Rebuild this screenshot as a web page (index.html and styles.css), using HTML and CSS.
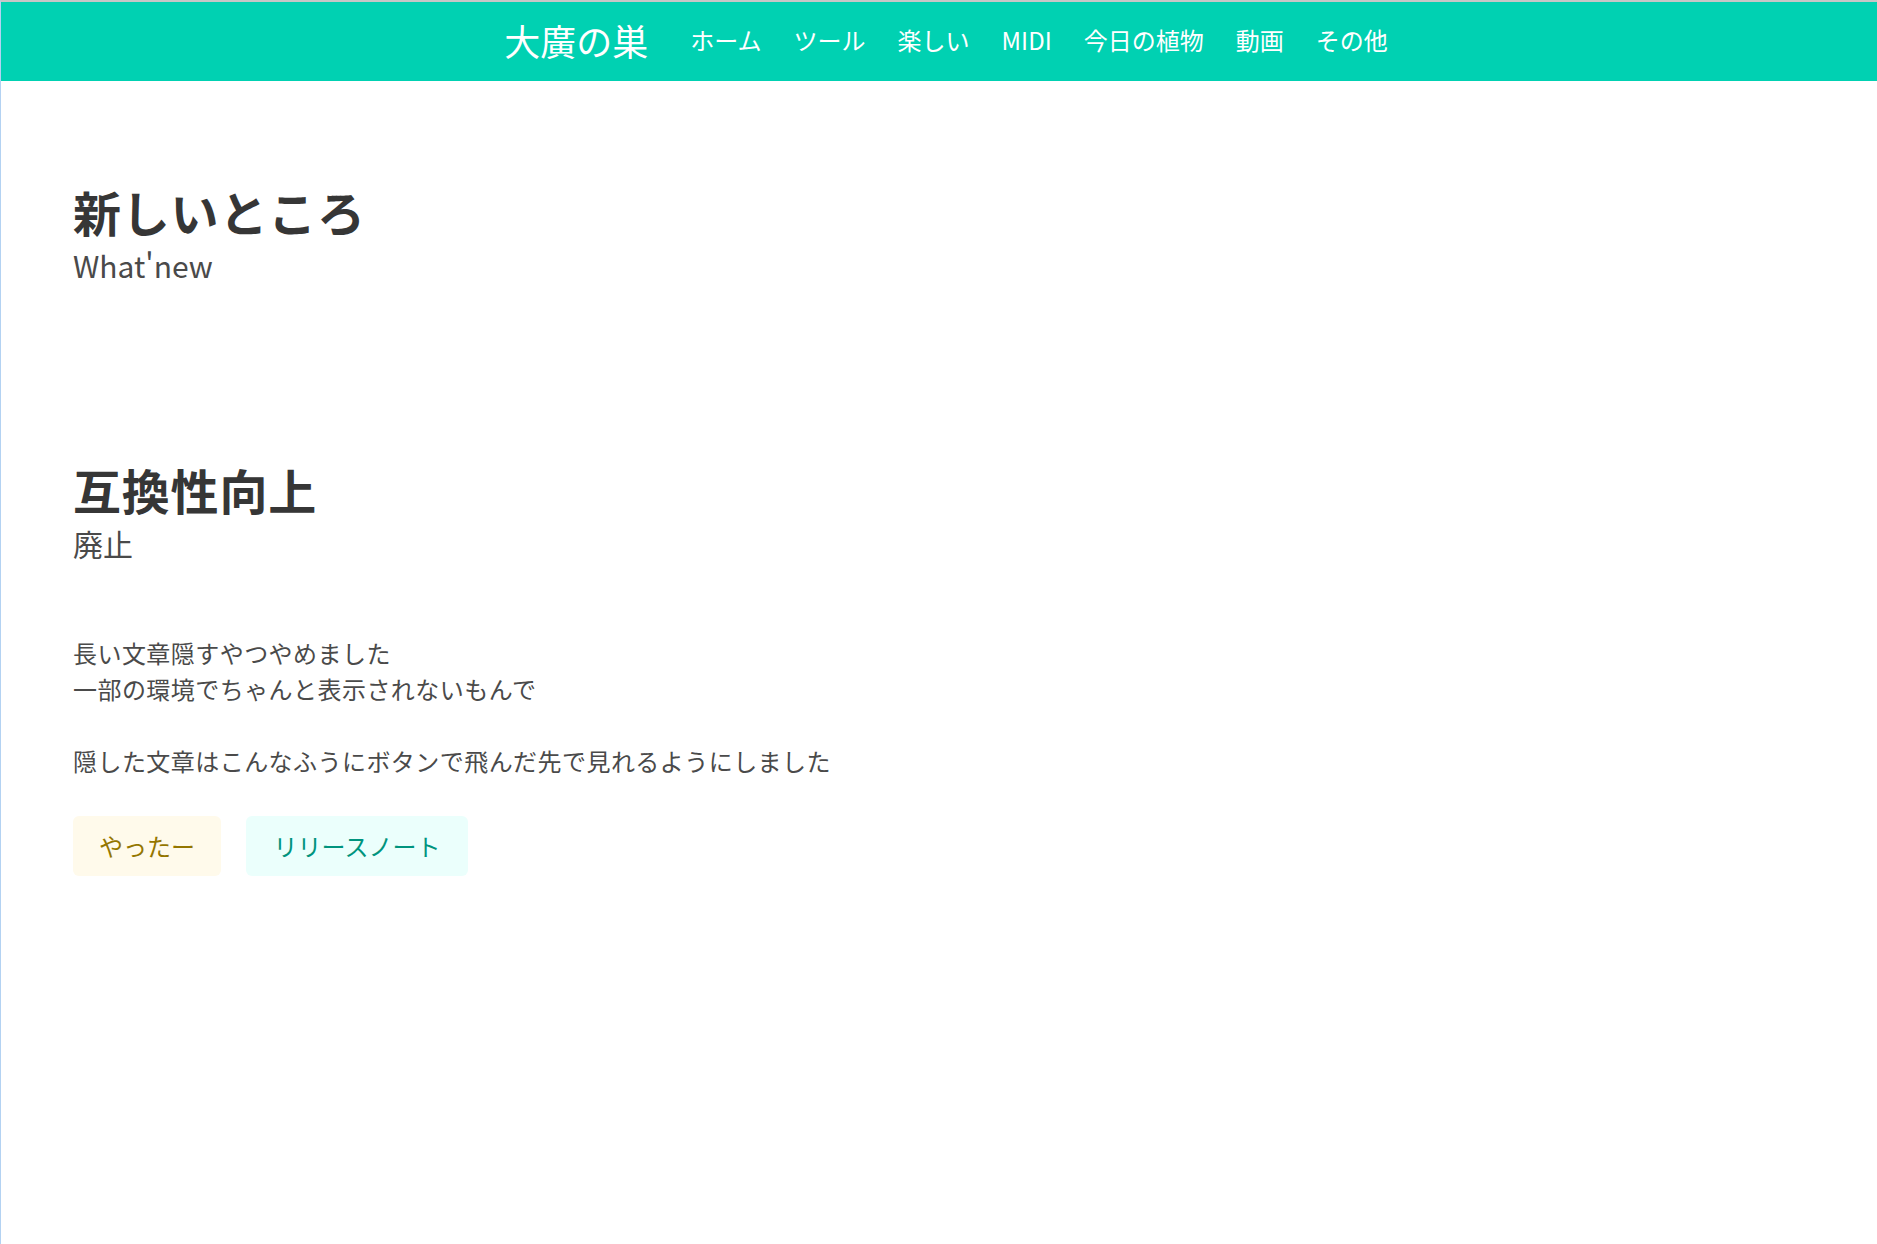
FILE: index.html
```html
<!DOCTYPE html>
<html lang="ja">
<head>
<meta charset="utf-8">
<title>大廣の巣</title>
<link rel="stylesheet" href="styles.css">
</head>
<body>
<nav class="navbar">
  <a class="brand" href="#">大廣の巣</a>
  <div class="menu">
    <a class="item" href="#">ホーム</a>
    <a class="item" href="#">ツール</a>
    <a class="item" href="#">楽しい</a>
    <a class="item" href="#">MIDI</a>
    <a class="item" href="#">今日の植物</a>
    <a class="item" href="#">動画</a>
    <a class="item" href="#">その他</a>
  </div>
</nav>
<main>
  <section class="section first">
    <h1 class="title">新しいところ</h1>
    <h2 class="subtitle">What'new</h2>
  </section>
  <section class="section second">
    <h1 class="title">互換性向上</h1>
    <h2 class="subtitle">廃止</h2>
    <p class="text">長い文章隠すやつやめました<br>一部の環境でちゃんと表示されないもんで<br><br>隠した文章はこんなふうにボタンで飛んだ先で見れるようにしました</p>
    <div class="buttons">
      <a class="button warning" href="#">やったー</a>
      <a class="button primary" href="#">リリースノート</a>
    </div>
  </section>
</main>
</body>
</html>
```

FILE: styles.css
```css
html, body {
  margin: 0;
  padding: 0;
}
body {
  min-height: 100vh;
  box-sizing: border-box;
  border-top: 2px solid #c6c6c6;
  border-left: 1px solid #b3d2f2;
  background: #ffffff;
  font-family: "Noto Sans CJK JP", "Noto Sans", sans-serif;
  color: #4a4a4a;
  font-size: 24px;
  line-height: 1.5;
}
a {
  text-decoration: none;
}
.navbar {
  height: 79px;
  box-sizing: border-box;
  margin-left: -1px;
  border-left: 1px solid #2c559e;
  background: #00d1b2;
  display: flex;
  align-items: stretch;
  justify-content: center;
  padding-left: 12px;
  padding-bottom: 4px;
}
.brand {
  display: flex;
  align-items: center;
  padding: 0 26px 0 18px;
  color: #ffffff;
  font-size: 36px;
  line-height: 1;
}
.menu {
  display: flex;
  align-items: stretch;
}
.item {
  display: flex;
  align-items: center;
  padding: 0 16px;
  color: #ffffff;
  font-size: 24px;
  line-height: 1;
}
.section {
  padding: 0 72px;
}
.first {
  padding-top: 106px;
}
.second {
  padding-top: 180px;
}
.title {
  margin: 0;
  font-size: 48px;
  font-weight: 600;
  line-height: 48px;
  letter-spacing: 0.8px;
  color: #363636;
}
.subtitle {
  margin: 12px 0 0;
  font-size: 30px;
  font-weight: 400;
  line-height: 37.5px;
  color: #4a4a4a;
}
.text {
  margin: 73px 0 0;
  line-height: 36px;
  letter-spacing: 0.45px;
}
.buttons {
  display: flex;
  gap: 25px;
  margin-top: 37px;
}
.button {
  display: inline-flex;
  align-items: center;
  justify-content: center;
  height: 60px;
  box-sizing: border-box;
  padding: 0 25px;
  border: 1px solid transparent;
  border-radius: 6px;
  font-size: 24px;
  line-height: 1;
}
.warning {
  background: #fffaeb;
  color: #947600;
  min-width: 148px;
}
.primary {
  background: #ebfffc;
  color: #00947e;
  min-width: 222px;
}
```
